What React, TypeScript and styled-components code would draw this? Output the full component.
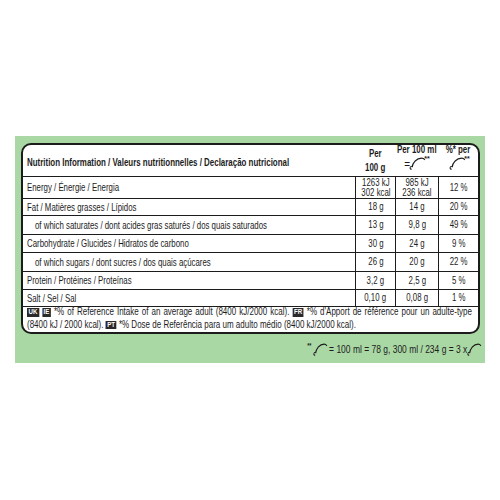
import React from "react";
import styled, { createGlobalStyle } from "styled-components";

const Global = createGlobalStyle`
  body {
    margin: 0;
    background: #ffffff;
    font-family: "Liberation Sans", Arial, sans-serif;
    color: #1c1c1c;
  }
`;

// the label is set in a narrow face; Liberation Sans squeezed to Arial Narrow's width
const NARROW = 0.77;

const rows = [
  { label: "Energy / Énergie / Energia", a: ["1263 kJ", "302 kcal"], b: ["985 kJ", "236 kcal"], c: "12 %", h: 22 },
  { label: "Fat / Matières grasses / Lípidos", a: ["18 g"], b: ["14 g"], c: "20 %", h: 17 },
  { label: "of which saturates / dont acides gras saturés / dos quais saturados", a: ["13 g"], b: ["9,8 g"], c: "49 %", h: 19, sub: true },
  { label: "Carbohydrate / Glucides / Hidratos de carbono", a: ["30 g"], b: ["24 g"], c: "9 %", h: 18 },
  { label: "of which sugars / dont sucres / dos quais açúcares", a: ["26 g"], b: ["20 g"], c: "22 %", h: 19, sub: true },
  { label: "Protein / Protéines / Proteínas", a: ["3,2 g"], b: ["2,5 g"], c: "5 %", h: 18 },
  { label: "Salt / Sel / Sal", a: ["0,10 g"], b: ["0,08 g"], c: "1 %", h: 17 },
];

const Scoop = ({ w = 22 }: { w?: number }) => (
  <svg width={w} height={14} viewBox="0 0 22 14" fill="none" stroke="#1c1c1c" preserveAspectRatio="none">
    <path d="M6 11.2 C6.5 6.5 11 2.2 17 2.2 C18.6 2.2 19.8 2.8 20.6 3.8" strokeWidth="1.3" />
    <path d="M6.4 10.3 C3.2 10 2.4 13.2 5.4 13.3" strokeWidth="1.1" />
  </svg>
);

export default function App() {
  return (
    <>
      <Global />
      <Panel>
        <Table>
          <HeadRow>
            <HeadTitle>
              <Narrow $origin="left">Nutrition Information / Valeurs nutritionnelles / Declaração nutricional</Narrow>
            </HeadTitle>
            <HeadCell>
              <Narrow>Per</Narrow>
              <Narrow>100 g</Narrow>
            </HeadCell>
            <HeadCell $top>
              <Narrow>Per 100 ml</Narrow>
              <IconLine>
                <Eq>=</Eq>
                <Scoop w={19} />
                <Stars>**</Stars>
              </IconLine>
            </HeadCell>
            <HeadCell $top>
              <Narrow>%* per</Narrow>
              <IconLine>
                <Scoop w={19} />
                <Stars>**</Stars>
              </IconLine>
            </HeadCell>
          </HeadRow>
          {rows.map((r) => (
            <Row key={r.label} $h={r.h}>
              <Label $sub={r.sub}>
                <Narrow $origin="left">{r.label}</Narrow>
              </Label>
              <Value>{r.a.map((t) => <Narrow key={t}>{t}</Narrow>)}</Value>
              <Value>{r.b.map((t) => <Narrow key={t}>{t}</Narrow>)}</Value>
              <Value><Narrow>{r.c}</Narrow></Value>
            </Row>
          ))}
          <Note>
            <NoteText>
              <NoteLine $fill>
                <Badge>UK</Badge> <Badge>IE</Badge> <span>*% of Reference Intake of an average adult (8400 kJ/2000 kcal).</span>{" "}
                <Badge>FR</Badge> <span>*% d'Apport de référence pour un adulte-type</span>
              </NoteLine>
              <NoteLine>
                <span>(8400 kJ / 2000 kcal).</span> <Badge>PT</Badge>{" "}
                <span>*% Dose de Referência para um adulto médio (8400 kJ/2000 kcal).</span>
              </NoteLine>
            </NoteText>
          </Note>
        </Table>
        <Portion>
          <PortionLine>
            <Stars>**</Stars>
            <Scoop />
            <PortionText>= 100 ml = 78 g, 300 ml / 234 g = 3 x</PortionText>
            <Scoop />
          </PortionLine>
        </Portion>
      </Panel>
    </>
  );
}

const Panel = styled.div`
  margin: 136px 0 0 15px;
  width: 470px;
  height: 227px;
  box-sizing: border-box;
  padding: 7px 5px 0 6px;
  background: #aad8a4;
`;

const Table = styled.div`
  background: #ffffff;
  border: 2px solid #1c1c1c;
  border-radius: 10px;
  overflow: hidden;
`;

const Narrow = styled.span<{ $origin?: string }>`
  display: inline-block;
  white-space: nowrap;
  transform: scaleX(${NARROW});
  transform-origin: ${(p) => p.$origin || "center"} center;
`;

const grid = `
  display: grid;
  grid-template-columns: minmax(0, 1fr) 40px 43px 40px;
  box-sizing: border-box;
`;

const HeadRow = styled.div`
  ${grid}
  height: 32px;
  border-bottom: 1.5px solid #1c1c1c;
  font-weight: bold;
  font-size: 10.3px;
`;

const HeadTitle = styled.div`
  display: flex;
  align-items: center;
  padding-left: 4px;
  padding-top: 3px;
  min-width: 0;
`;

const HeadCell = styled.div<{ $top?: boolean }>`
  display: flex;
  flex-direction: column;
  align-items: center;
  justify-content: ${(p) => (p.$top ? "flex-start" : "center")};
  line-height: ${(p) => (p.$top ? 10 : 14)}px;
  white-space: nowrap;
  min-width: 0;
`;

const IconLine = styled.div`
  display: flex;
  align-items: flex-end;
  height: 15px;
  font-weight: normal;
  font-size: 10px;
  margin-left: 1px;
`;

const Eq = styled.span`
  line-height: 10px;
  margin-right: -3px;
`;

const Stars = styled.span`
  font-size: 7px;
  font-weight: bold;
  align-self: flex-start;
  line-height: 7px;
  margin-left: -2px;
`;

const Row = styled.div<{ $h: number }>`
  ${grid}
  height: ${(p) => p.$h}px;
  border-bottom: 1.5px solid #1c1c1c;
  font-size: 10.2px;
`;

const Label = styled.div<{ $sub?: boolean }>`
  display: flex;
  align-items: center;
  padding-left: ${(p) => (p.$sub ? 12 : 4)}px;
  min-width: 0;
`;

const Value = styled.div`
  display: flex;
  flex-direction: column;
  align-items: center;
  justify-content: center;
  border-left: 1.5px solid #1c1c1c;
  line-height: 10px;
  min-width: 0;
`;

const Note = styled.div`
  height: 26px;
  padding: 0 0 0 4px;
  box-sizing: border-box;
`;

const NoteText = styled.div`
  width: calc((100% - 6px) / ${NARROW});
  transform: scaleX(${NARROW});
  transform-origin: left top;
  font-size: 10.4px;
  line-height: 12.5px;
  margin-top: -1px;
`;

const NoteLine = styled.div<{ $fill?: boolean }>`
  white-space: nowrap;
  text-align: ${(p) => (p.$fill ? "justify" : "left")};
  text-align-last: ${(p) => (p.$fill ? "justify" : "left")};
`;

const Badge = styled.span`
  display: inline-block;
  background: #2a2a2a;
  color: #ffffff;
  font-weight: bold;
  font-size: 8px;
  line-height: 8.5px;
  padding: 0 2px;
  vertical-align: 1px;
`;

const Portion = styled.div`
  display: flex;
  justify-content: flex-end;
  padding: 8px 0 0 0;
  margin-right: -2px;
`;

const PortionLine = styled.div`
  display: flex;
  align-items: flex-end;
  transform: scaleX(${NARROW});
  transform-origin: right center;
  font-size: 11px;
  line-height: 11px;
`;

const PortionText = styled.span`
  margin: 0 -3px 1px 1px;
`;
